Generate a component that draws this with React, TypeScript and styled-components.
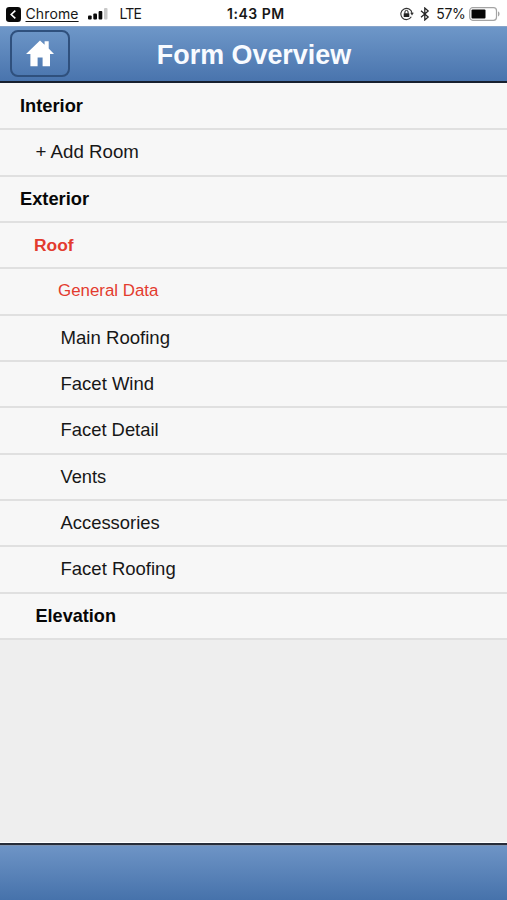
import React from 'react';
import styled, { createGlobalStyle } from 'styled-components';

const GlobalStyle = createGlobalStyle`
  * { box-sizing: border-box; }
  body { margin: 0; background: #eeeeee; }
`;

const Screen = styled.div`
  display: flex;
  flex-direction: column;
  width: 100%;
  height: 900px;
  overflow: hidden;
  background: #eeeeee;
  font-family: "Liberation Sans", Arial, sans-serif;
`;

const StatusBar = styled.div`
  display: grid;
  grid-template-columns: 221px auto 1fr;
  align-items: center;
  height: 26px;
  flex: none;
  padding: 2px 7px 0 6px;
  background: #fff;
  color: #171717;
  font: 14px/24px Inter, sans-serif;
  white-space: nowrap;
  svg { display: block; flex: none; }
`;

const StatusLeft = styled.div`
  display: flex;
  align-items: center;
`;

const BackApp = styled.a`
  margin-left: 4.5px;
  letter-spacing: 0.12px;
  text-decoration: underline;
  text-underline-offset: 2px;
  text-decoration-thickness: 1px;
`;

const Signal = styled.svg`
  margin-left: 9px;
`;

const Carrier = styled.span`
  margin-left: 12px;
  letter-spacing: -0.8px;
`;

const Clock = styled.span`
  font-size: 14px;
  font-weight: 600;
  letter-spacing: 0.5px;
`;

const StatusRight = styled.div`
  display: flex;
  align-items: center;
  justify-content: flex-end;
`;

const Bluetooth = styled.svg`
  margin-left: 6px;
`;

const Percent = styled.span`
  margin: 0 3.5px 0 6px;
  letter-spacing: -0.3px;
`;

const Header = styled.header`
  display: grid;
  grid-template-columns: 60px 1fr 60px;
  align-items: center;
  flex: none;
  height: 57px;
  padding: 0 10px 1px;
  background: linear-gradient(#6e97c8, #4974ad);
  border-top: 1px solid #87a4ca;
  border-bottom: 2px solid #17202f;
`;

const HomeButton = styled.button`
  display: flex;
  align-items: center;
  justify-content: center;
  width: 60px;
  height: 47px;
  padding: 0;
  background: transparent;
  border: 2px solid #2f507d;
  border-radius: 8px;
`;

const Title = styled.h1`
  margin: 2px 0 0 1px;
  color: #f8fbff;
  font-size: 26.9px;
  line-height: 32px;
  text-align: center;
  white-space: nowrap;
`;

const List = styled.ul`
  flex: none;
  margin: 0;
  padding: 0;
  list-style: none;
`;

const Row = styled.li<{ $indent: number; $size: number; $bold?: boolean; $alert?: boolean }>`
  display: flex;
  align-items: center;
  height: 46.35px;
  padding: 0 0 0 ${(p) => p.$indent}px;
  background: #f7f7f7;
  border-bottom: 2px solid #e0e0e0;
  color: ${(p) => (p.$alert ? '#e33b2e' : p.$bold ? '#070707' : '#171717')};
  font-size: ${(p) => p.$size}px;
  font-weight: ${(p) => (p.$bold ? 700 : 400)};
  line-height: 22px;
  white-space: nowrap;
  &:first-child { height: 47.2px; }
`;

const Footer = styled.footer`
  flex: none;
  height: 58px;
  margin-top: auto;
  background: linear-gradient(#7096c7, #4672ab);
  border-top: 1px solid #fff;
  box-shadow: inset 0 2px #262c39, inset 0 3px #7d92b0;
`;

const rows = [
  { label: 'Interior', indent: 20, size: 18.3, bold: true },
  { label: '+ Add Room', indent: 35.5, size: 18.7 },
  { label: 'Exterior', indent: 20, size: 18.3, bold: true },
  { label: 'Roof', indent: 34, size: 17.4, bold: true, alert: true },
  { label: 'General Data', indent: 58, size: 16.9, alert: true },
  { label: 'Main Roofing', indent: 60.5, size: 18.6 },
  { label: 'Facet Wind', indent: 60.5, size: 18.5 },
  { label: 'Facet Detail', indent: 60.5, size: 18.4 },
  { label: 'Vents', indent: 60.5, size: 18.3 },
  { label: 'Accessories', indent: 60.5, size: 18.4 },
  { label: 'Facet Roofing', indent: 60.5, size: 18.5 },
  { label: 'Elevation', indent: 35.5, size: 18.1, bold: true },
];

export default function App() {
  return (
    <Screen>
      <GlobalStyle />
      <StatusBar>
        <StatusLeft>
          <svg width="15" height="15" viewBox="0 0 15 15">
            <rect width="15" height="15" rx="3.2" fill="#080808" />
            <path d="M9.3 3.7 5.2 7.5l4.1 3.8" fill="none" stroke="#fff" strokeWidth="1.6" />
          </svg>
          <BackApp>Chrome</BackApp>
          <Signal width="20" height="12" viewBox="0 0 20 12">
            <rect x="0" y="7.5" width="3.7" height="4" rx="1" fill="#090909" />
            <rect x="5.3" y="5.5" width="3.7" height="6" rx="1" fill="#090909" />
            <rect x="10.6" y="3" width="3.7" height="8.5" rx="1" fill="#090909" />
            <rect x="16" y="0" width="3.5" height="11.5" rx="1" fill="#c8c8c8" />
          </Signal>
          <Carrier>LTE</Carrier>
        </StatusLeft>
        <Clock>1:43 PM</Clock>
        <StatusRight>
          <svg width="14" height="14" viewBox="0 0 14 14">
            <path d="M11.3 9.8A5.6 5.6 0 1 1 12 6.2" fill="none" stroke="#333" strokeWidth="1.1" />
            <path d="M10.2 5.8h3.6L12 8.5z" fill="#333" />
            <rect x="3.7" y="6.3" width="5.6" height="3.8" rx=".5" fill="#222" />
            <path d="M4.9 6.5V5a1.6 1.6 0 0 1 3.2 0v1.5" fill="none" stroke="#222" strokeWidth="1" />
          </svg>
          <Bluetooth width="10" height="14" viewBox="0 0 10 14">
            <path d="M1 3.7 8.2 10 4.8 13V1l3.4 3L1 10.3" fill="none" stroke="#222" strokeWidth="1.25" />
          </Bluetooth>
          <Percent>57%</Percent>
          <svg width="31" height="14" viewBox="0 0 31 14">
            <rect x=".7" y=".7" width="26.8" height="12.6" rx="3" fill="#fff" stroke="#a4a4a4" strokeWidth="1.2" />
            <rect x="2.5" y="2.4" width="14" height="9.2" rx="1" fill="#050505" />
            <path d="M29 4.6c2 .4 2 4.4 0 4.8z" fill="#a4a4a4" />
          </svg>
        </StatusRight>
      </StatusBar>
      <Header>
        <HomeButton aria-label="Home">
          <svg width="28" height="27" viewBox="0 0 28 27">
            <path d="M14 .5 18.6 4.8V1.2h4.1v7.4L28 14H24v12.3h-7.4V17.5h-5v8.8H4.4V14H0z" fill="#fff" />
          </svg>
        </HomeButton>
        <Title>Form Overview</Title>
      </Header>
      <List>
        {rows.map((r) => (
          <Row key={r.label} $indent={r.indent} $size={r.size} $bold={r.bold} $alert={r.alert}>
            {r.label}
          </Row>
        ))}
      </List>
      <Footer />
    </Screen>
  );
}
